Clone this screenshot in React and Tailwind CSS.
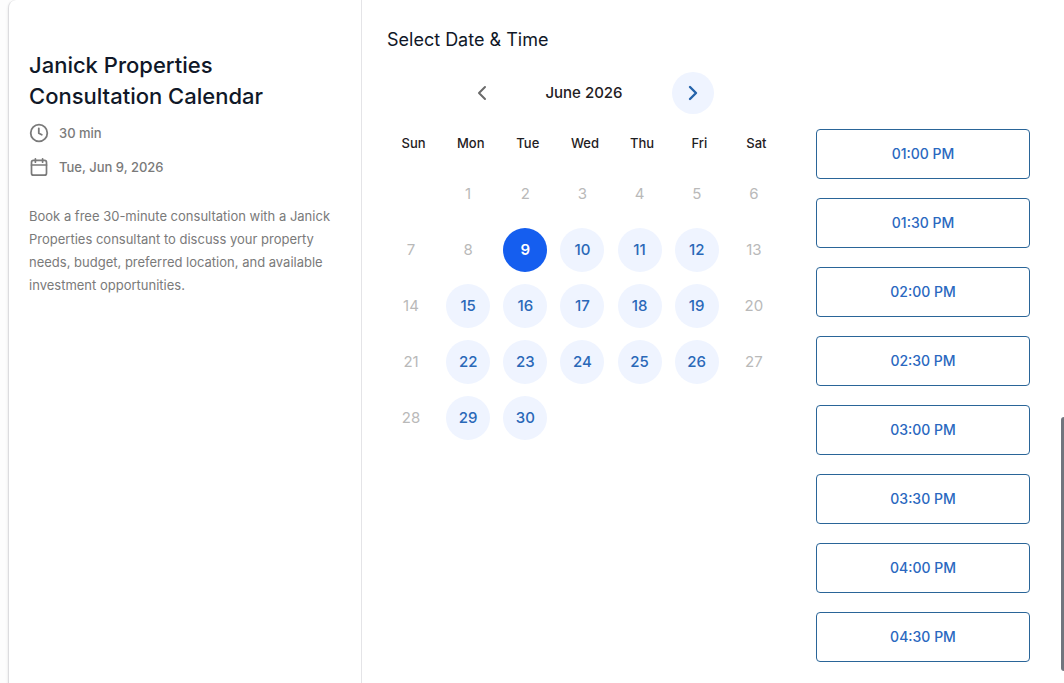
import { ChevronLeft, ChevronRight } from "lucide-react";

const WEEKDAYS = ["Sun", "Mon", "Tue", "Wed", "Thu", "Fri", "Sat"];

const WEEKS = [
  [null, 1, 2, 3, 4, 5, 6],
  [7, 8, 9, 10, 11, 12, 13],
  [14, 15, 16, 17, 18, 19, 20],
  [21, 22, 23, 24, 25, 26, 27],
  [28, 29, 30, null, null, null, null],
];

const SLOTS = [
  "01:00 PM",
  "01:30 PM",
  "02:00 PM",
  "02:30 PM",
  "03:00 PM",
  "03:30 PM",
  "04:00 PM",
  "04:30 PM",
];

const SELECTED_DAY = 9;

function ClockIcon() {
  return (
    <svg width="20" height="20" viewBox="0 0 20 20" fill="none" stroke="currentColor" strokeWidth="1.8" strokeLinecap="round" strokeLinejoin="round" aria-hidden="true">
      <circle cx="10" cy="10" r="8.3" />
      <path d="M9.8 5.3v4.9l3 1.5" />
    </svg>
  );
}

function CalendarIcon() {
  return (
    <svg width="20" height="20" viewBox="0 0 20 20" fill="none" stroke="currentColor" strokeWidth="1.7" strokeLinecap="round" strokeLinejoin="round" aria-hidden="true">
      <rect x="2.5" y="3.4" width="15" height="14.8" rx="2" />
      <path d="M6.4 1.8v3.4M13.6 1.8v3.4M2.5 8h15" />
    </svg>
  );
}

function Day({ day, weekday }) {
  const available = day >= SELECTED_DAY && weekday > 0 && weekday < 6;
  const base = "flex size-11 items-center justify-center rounded-full text-[15px] leading-5";
  if (day === SELECTED_DAY) {
    return (
      <button type="button" aria-pressed="true" className={`${base} bg-[#155eef] font-semibold text-white`}>
        {day}
      </button>
    );
  }
  if (available) {
    return (
      <button type="button" className={`${base} bg-[#eff4ff] font-medium text-[#2a68b8]`}>
        {day}
      </button>
    );
  }
  return (
    <button type="button" disabled className={`${base} text-[#b9b9b9]`}>
      {day}
    </button>
  );
}

function Details() {
  return (
    <aside className="w-[353px] shrink-0 border-r border-[#e4e4e7] px-5 pt-[50px]">
      <h1 className="text-[22px] leading-[31px] font-medium text-[#101828]">
        Janick Properties Consultation Calendar
      </h1>
      <ul className="mt-[11px] flex flex-col gap-3.5 text-[13px] leading-5 font-medium text-[#7a7a7a]">
        <li className="flex items-center gap-2.5">
          <ClockIcon />
          <span>30 min</span>
        </li>
        <li className="flex items-center gap-2.5">
          <CalendarIcon />
          <span>Tue, Jun 9, 2026</span>
        </li>
      </ul>
      <p className="mt-7 text-[13px] leading-[23px] text-[#7a7a7a]">
        Book a free 30-minute consultation with a Janick Properties consultant to discuss your
        property needs, budget, preferred location, and available investment opportunities.
      </p>
    </aside>
  );
}

function MonthPicker() {
  return (
    <div className="w-[400px] shrink-0">
      <div className="mx-auto flex w-[260px] items-center justify-between">
        <button type="button" aria-label="Previous month" className="flex size-[42px] items-center justify-end rounded-full pr-0.5 text-[#6b6b6b]">
          <ChevronLeft size={24} />
        </button>
        <h3 className="text-[15px] leading-5 font-medium text-[#1f2023]">June 2026</h3>
        <button type="button" aria-label="Next month" className="flex size-[42px] items-center justify-center rounded-full bg-[#eff4ff] text-[#2563ab]">
          <ChevronRight size={24} strokeWidth={2.4} />
        </button>
      </div>
      <table className="mt-[19px] w-full table-fixed border-collapse">
        <thead>
          <tr>
            {WEEKDAYS.map((name) => (
              <th key={name} scope="col" className="h-5 p-0 pl-0.5 text-center text-[13px] leading-5 font-medium text-[#1f2023]">
                {name}
              </th>
            ))}
          </tr>
          <tr aria-hidden="true">
            <td className="h-[13px] p-0" colSpan={7} />
          </tr>
        </thead>
        <tbody>
          {WEEKS.map((week, row) => (
            <tr key={row}>
              {week.map((day, weekday) => (
                <td key={weekday} className="h-14 py-1.5 pr-2 pl-[5px]">
                  {day && <Day day={day} weekday={weekday} />}
                </td>
              ))}
            </tr>
          ))}
        </tbody>
      </table>
    </div>
  );
}

export default function App() {
  return (
    <div className="relative min-h-screen bg-[#fdfdfd] pl-2 font-['Inter',sans-serif]">
      <main className="flex min-h-screen rounded-tl-lg border-l border-[#dcdcdf] bg-white shadow-sm">
        <Details />
        <section className="flex-1 pt-[27px] pr-[34px] pb-5 pl-[22px]">
          <h2 className="pl-[3px] text-lg leading-[26px] text-[#101828]">Select Date &amp; Time</h2>
          <div className="mt-[19px] flex gap-8">
            <MonthPicker />
            <div className="flex flex-1 flex-col gap-[19px] pt-[57px]">
              {SLOTS.map((slot) => (
                <button
                  key={slot}
                  type="button"
                  className="h-[50px] rounded border border-[#2a6598] text-sm font-medium text-[#2a68c0]"
                >
                  {slot}
                </button>
              ))}
            </div>
          </div>
        </section>
      </main>
      <div className="absolute right-0 bottom-3 h-[254px] w-[3px] rounded-l-sm bg-[#71757e]" />
    </div>
  );
}
